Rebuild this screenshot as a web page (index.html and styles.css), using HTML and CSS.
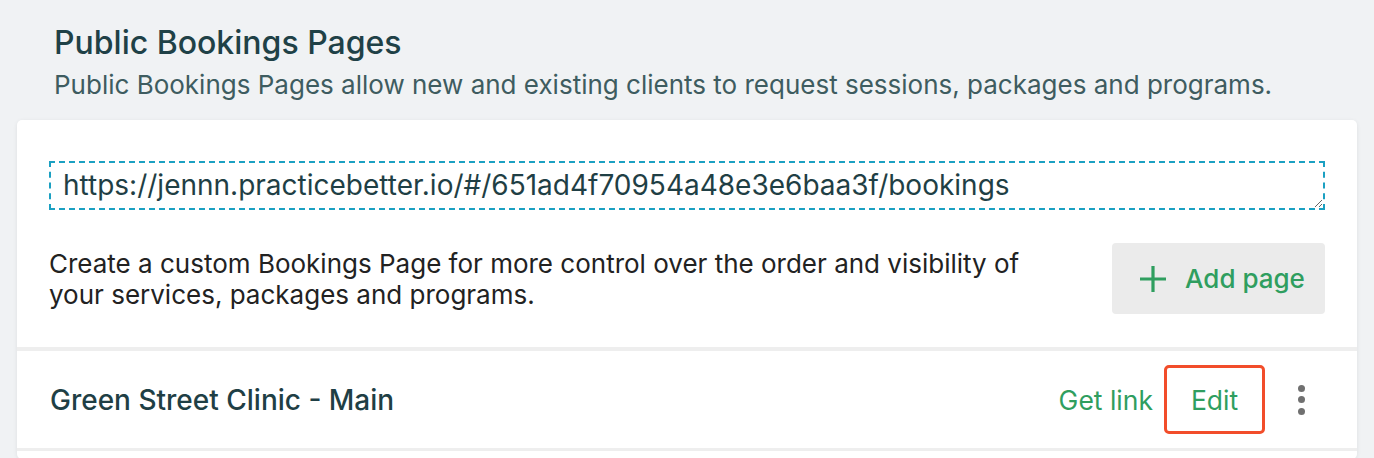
FILE: index.html
```html
<!DOCTYPE html>
<html lang="en">
<head>
<meta charset="utf-8">
<title>Public Bookings Pages</title>
<link rel="stylesheet" href="styles.css">
</head>
<body>
<div class="page">
  <header class="intro">
    <h1 class="title">Public Bookings Pages</h1>
    <p class="subtitle">Public Bookings Pages allow new and existing clients to request sessions, packages and programs.</p>
  </header>
  <section class="card">
    <div class="top">
      <textarea class="url" rows="1" readonly>https://jennn.practicebetter.io/#/651ad4f70954a48e3e6baa3f/bookings</textarea>
      <div class="custom">
        <p class="custom-text">Create a custom Bookings Page for more control over the order and visibility of your services, packages and programs.</p>
        <button class="add-btn" type="button">
          <svg class="plus" viewBox="0 0 28 28" width="28" height="28" aria-hidden="true"><path d="M14 1v26M1 14h26" stroke="currentColor" stroke-width="3.2" fill="none"/></svg>
          <span>Add page</span>
        </button>
      </div>
    </div>
    <div class="row">
      <span class="row-title">Green Street Clinic - Main</span>
      <div class="actions">
        <a class="link" href="#">Get link</a>
        <a class="link edit" href="#">Edit</a>
        <span class="kebab" aria-label="More"><i></i><i></i><i></i></span>
      </div>
    </div>
    <div class="row-next"></div>
  </section>
</div>
</body>
</html>
```
FILE: styles.css
```css
html, body {
  margin: 0;
  padding: 0;
}
body {
  background: #f0f2f4;
  font-family: Inter, "Noto Sans", sans-serif;
  color: #222;
}
.page {
  padding: 0 17px;
}
.intro {
  padding: 24px 0 0 37px;
}
.title {
  margin: 0;
  font-size: 32px;
  font-weight: 500;
  line-height: 38px;
  color: #1f4147;
}
.subtitle {
  margin: 6px 0 0 0;
  font-size: 26px;
  line-height: 34px;
  color: #3e5c60;
}
.card {
  margin-top: 18px;
  width: 1340px;
  background: #fff;
  border-radius: 5px;
  box-shadow: 0 1px 4px rgba(0,0,0,0.08);
}
.top {
  padding: 41px 32px 33px 32px;
}
.url {
  display: block;
  box-sizing: border-box;
  width: 100%;
  height: 49px;
  margin: 0;
  padding: 5px 12px;
  border: 2px dashed #1ba0c2;
  border-radius: 0;
  outline: none;
  font-family: Inter, "Noto Sans", sans-serif;
  font-size: 28px;
  line-height: 35px;
  color: #1f3f45;
  resize: vertical;
  overflow: hidden;
  background: #fff;
}
.custom {
  margin-top: 33px;
  display: flex;
  align-items: center;
  justify-content: space-between;
}
.custom-text {
  margin: 0;
  width: 1000px;
  font-size: 26px;
  line-height: 31px;
  color: #222;
}
.add-btn {
  display: flex;
  align-items: center;
  justify-content: center;
  gap: 18px;
  width: 213px;
  height: 71px;
  border: 0;
  border-radius: 4px;
  background: #ebebeb;
  color: #2f9e5f;
  font-family: Inter, "Noto Sans", sans-serif;
  font-size: 26px;
  font-weight: 500;
  padding: 0 0 0 7px;
}
.plus {
  width: 28px;
  height: 28px;
}
.row {
  border-top: 4px solid #eeeeee;
  border-bottom: 3px solid #eeeeee;
  height: 97px;
  display: flex;
  align-items: center;
  justify-content: space-between;
  padding: 0 52px 0 33px;
}
.row-title {
  font-size: 28px;
  font-weight: 500;
  color: #1f3f45;
}
.actions {
  display: flex;
  align-items: center;
}
.link {
  font-size: 26.5px;
  color: #2f9e5f;
  text-decoration: none;
}
.edit {
  margin-left: 11px;
  width: 101px;
  height: 69px;
  box-sizing: border-box;
  border: 3px solid #f24d2a;
  border-radius: 5px;
  display: flex;
  align-items: center;
  justify-content: center;
}
.kebab {
  margin-left: 33px;
  display: flex;
  flex-direction: column;
  gap: 4.5px;
  width: 7px;
}
.kebab i {
  display: block;
  width: 7px;
  height: 7px;
  border-radius: 50%;
  background: #707070;
}
.row-next {
  height: 8px;
}
```
